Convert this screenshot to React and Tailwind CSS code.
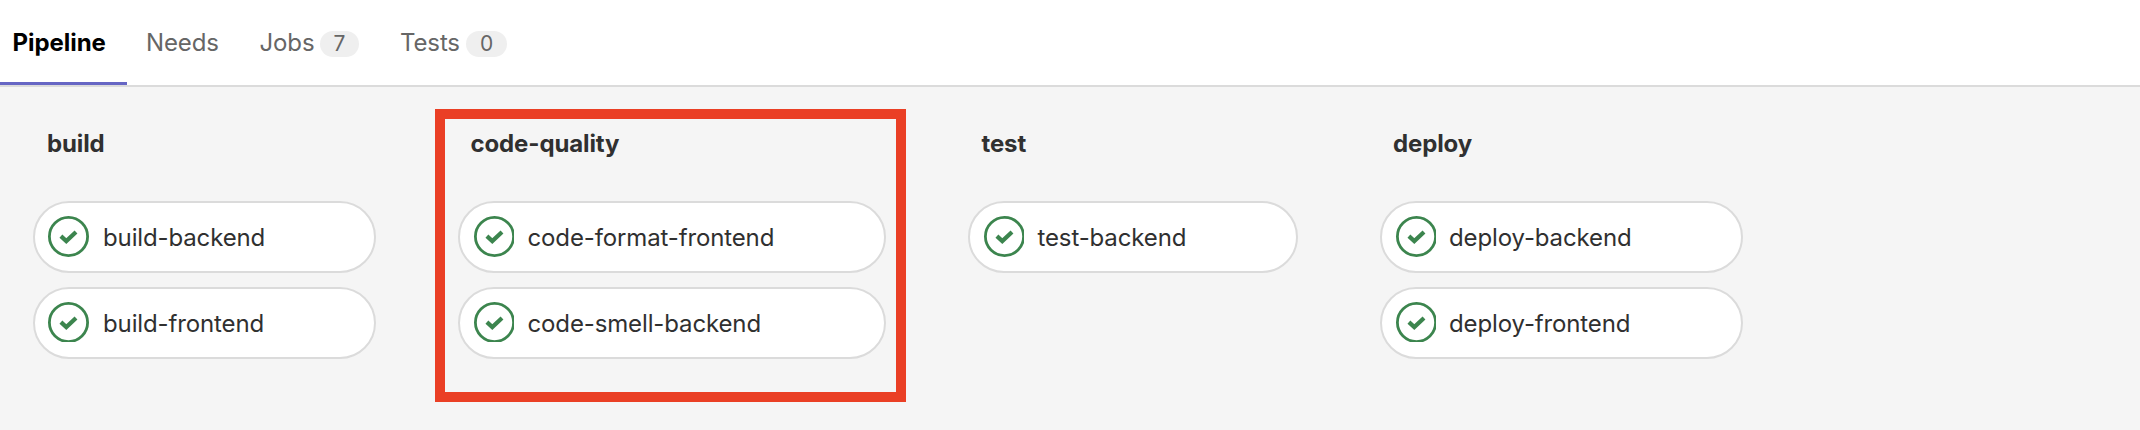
const stages = [
  { name: 'build', jobs: ['build-backend', 'build-frontend'], width: 'w-[343px]', title: 'pl-[14px]', pad: 'pl-[13px]', label: 'pl-[14px]', icon: 41 },
  { name: 'code-quality', jobs: ['code-format-frontend', 'code-smell-backend'], width: 'w-[428px]', title: 'pl-[12.5px]', pad: 'pl-[14px]', label: 'pl-[13.5px]', icon: 40, highlighted: true },
  { name: 'test', jobs: ['test-backend'], width: 'w-[330px]', title: 'pl-[13.5px]', pad: 'pl-[14px]', label: 'pl-[13.5px]', icon: 40 },
  { name: 'deploy', jobs: ['deploy-backend', 'deploy-frontend'], width: 'w-[363px]', title: 'pl-[13px]', pad: 'pl-[14px]', label: 'pl-[13px]', icon: 40 },
];

function SuccessIcon({ width, height }) {
  return (
    <svg width={width} height={height} viewBox={`0 0 ${width} ${height}`} className="mt-[13px] shrink-0 self-start text-[#3c854e]" fill="none" stroke="currentColor">
      <circle cx="20.5" cy="20.5" r="19.1" strokeWidth="2.8" />
      <path d="M12.9 20.1 L18.3 25.1 L28 16" strokeWidth="4.2" strokeLinejoin="miter" />
    </svg>
  );
}

function Tab({ children, count, badge, className }) {
  return (
    <div className={`flex items-center whitespace-nowrap text-[#666] ${className}`}>
      <span className="pt-[1px]">{children}</span>
      {count !== undefined && (
        <span className={`ml-auto mt-[3px] flex h-[26px] items-center justify-center rounded-full bg-[#efefef] text-[21px] ${badge}`}>
          {count}
        </span>
      )}
    </div>
  );
}

function Stage({ stage }) {
  return (
    <section className={`relative shrink-0 ${stage.width}`}>
      {stage.highlighted && (
        <div className="pointer-events-none absolute -left-[23px] -top-[17px] h-[293px] w-[471px] border-[10px] border-[#ea3f25]" />
      )}
      <h2 className={`h-[75px] pt-[2px] text-[24px] font-bold leading-[32px] tracking-[-0.12px] ${stage.title}`}>{stage.name}</h2>
      <div className="flex flex-col gap-[14px]">
        {stage.jobs.map((job, i) => (
          <div key={job} className={`flex h-[72px] items-center rounded-full border-2 border-[#dbdbdb] bg-white ${stage.pad}`}>
            <SuccessIcon width={stage.icon} height={i === 0 ? 41 : 40} />
            <span className={`whitespace-nowrap pt-[2px] leading-[32px] ${stage.label}`}>{job}</span>
          </div>
        ))}
      </div>
    </section>
  );
}

export default function App() {
  return (
    <div className="flex h-[430px] w-[2140px] flex-col overflow-hidden bg-[#f5f5f5] font-['Inter',sans-serif] text-[24px] tracking-[-0.13px] text-[#303030]">
      <nav className="flex h-[87px] shrink-0 border-b-2 border-[#dbdbdb] bg-white">
        <div className="flex w-[127px] items-center border-b-[3px] border-[#6666c4] pl-[12.5px] pt-[3px] font-bold tracking-[-0.05px] text-black">
          Pipeline
        </div>
        <Tab className="w-[113px] pl-[19px]">Needs</Tab>
        <Tab className="w-[119px] pl-[19.5px]" badge="w-[39px]" count={7}>Jobs</Tab>
        <Tab className="ml-[21px] w-[127px] pl-[20px]" badge="w-[41px]" count={0}>Tests</Tab>
      </nav>
      <main className="flex items-start gap-[82px] pl-[33px] pt-[39px]">
        {stages.map((stage) => (
          <Stage key={stage.name} stage={stage} />
        ))}
      </main>
    </div>
  );
}
